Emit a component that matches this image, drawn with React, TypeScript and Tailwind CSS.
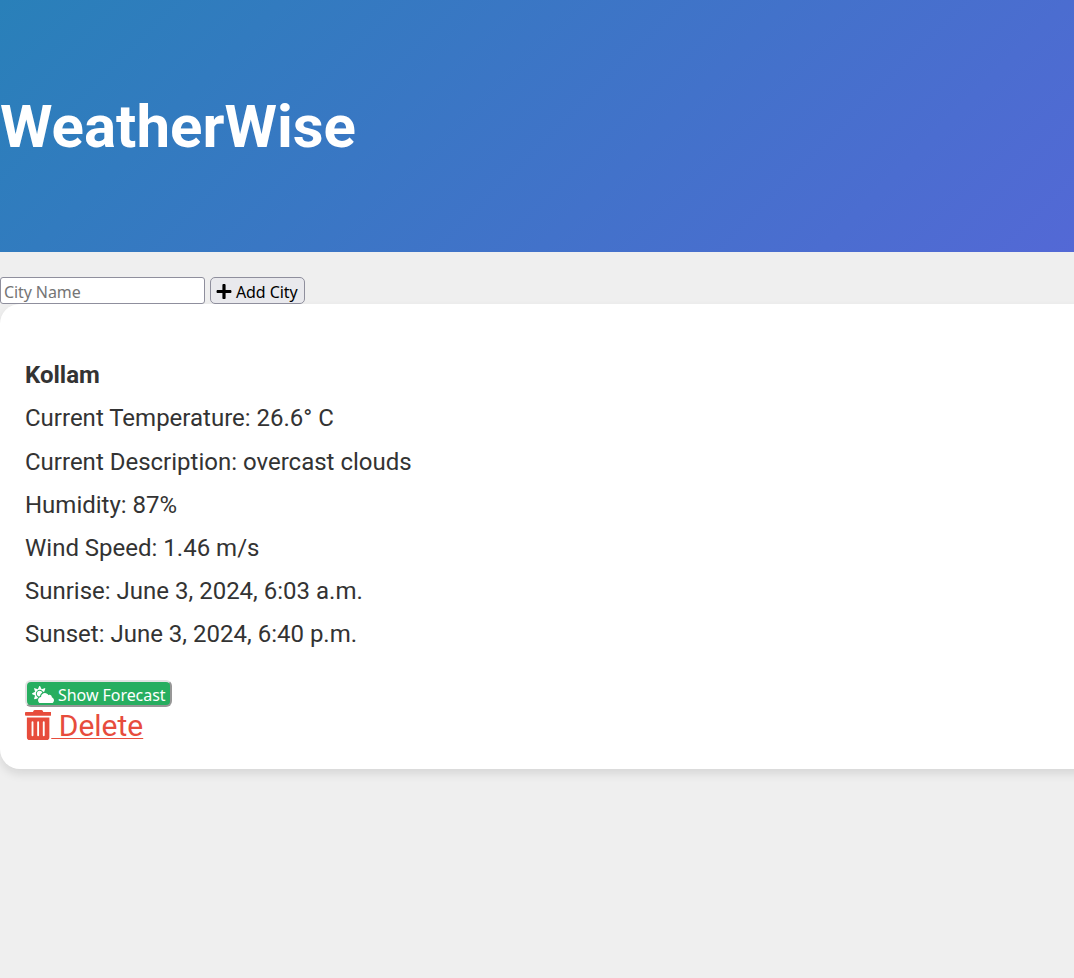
import React from "react";
import { FaPlus, FaCloudSun, FaTrashAlt } from "react-icons/fa";

const details = [
  "Current Temperature: 26.6° C",
  "Current Description: overcast clouds",
  "Humidity: 87%",
  "Wind Speed: 1.46 m/s",
  "Sunrise: June 3, 2024, 6:03 a.m.",
  "Sunset: June 3, 2024, 6:40 p.m.",
];

export default function App() {
  return (
    <div className="h-[978px] w-full overflow-hidden bg-[#efefef] font-['Roboto',sans-serif] text-[#333]">
      <header className="flex h-[252px] w-[1100px] items-center bg-[linear-gradient(135deg,#2980b9,#5468d6)] pt-[2px]">
        <h1 className="text-[60px] leading-[72px] font-bold text-white">WeatherWise</h1>
      </header>
      <form className="mt-[25px] flex gap-[5px] font-['Noto_Sans',sans-serif] text-[16px] text-black">
        <input
          placeholder="City Name"
          className="h-[27px] w-[205px] rounded-[3px] border border-[#8f8f9d] bg-white px-[3px] pt-[2px] tracking-[-0.1px] placeholder:text-[#757575]"
        />
        <button type="button" className="flex h-[27px] w-[95px] items-center gap-1 rounded-[5px] border border-[#8f8f9d] bg-[#e9e9ed] pt-[2px] pl-[5px] tracking-[-0.1px] whitespace-nowrap">
          <FaPlus className="h-[17px] w-4 shrink-0" />
          Add City
        </button>
      </form>
      <section className="h-[465px] w-[1100px] rounded-[20px] bg-white px-[25px] pt-[50.2px] shadow-[0_5px_10px_rgba(0,0,0,0.1)]">
        <h2 className="text-[24px] leading-[43.2px] font-bold">Kollam</h2>
        {details.map((line) => (
          <p key={line} className="text-[24px] leading-[43.2px]">{line}</p>
        ))}
        <button type="button" className="mt-[23.4px] flex h-[27px] w-[147px] items-center gap-1 rounded-[6px] border-2 border-[#e3e3e3] border-r-[#979797] border-b-[#979797] bg-[#27ae60] pt-[2px] pl-[5px] font-['Noto_Sans',sans-serif] text-[16px] tracking-[-0.05px] whitespace-nowrap text-white">
          <FaCloudSun className="h-[17.6px] w-[22px] shrink-0" />
          Show Forecast
        </button>
        <a className="flex items-start text-[30px] leading-[38px] text-[#e74c3c] underline decoration-[1px] underline-offset-[2px]">
          <FaTrashAlt className="mt-[3px] h-[30px] w-[26.25px]" />
          <span className="whitespace-pre"> Delete</span>
        </a>
      </section>
    </div>
  );
}
